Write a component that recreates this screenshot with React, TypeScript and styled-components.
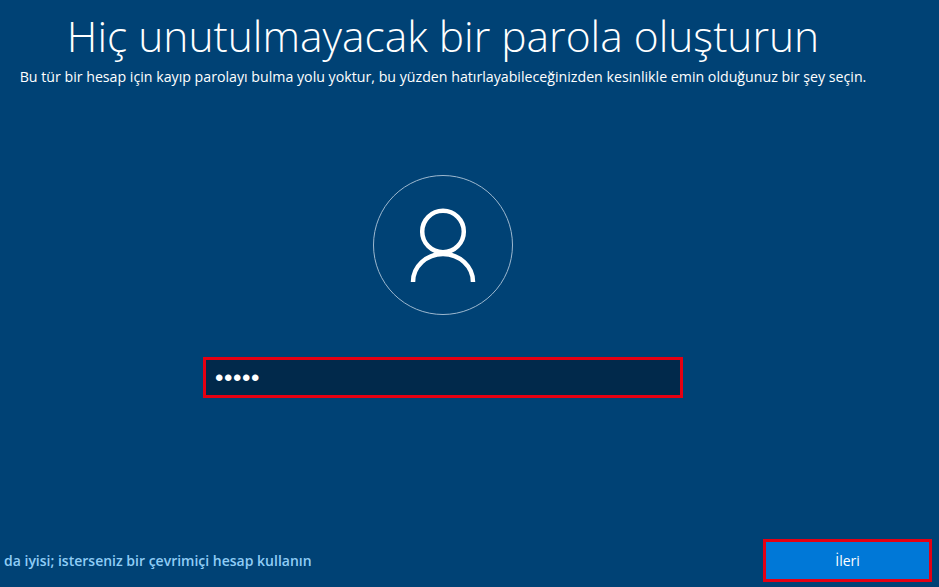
import React from "react";
import styled, { createGlobalStyle } from "styled-components";

const GlobalStyle = createGlobalStyle`
  html, body {
    margin: 0;
    padding: 0;
    background: #004275;
  }
`;

export default function App() {
  return (
    <>
      <GlobalStyle />
      <Page>
        <Main>
          <Title>Hiç unutulmayacak bir parola oluşturun</Title>
          <Subtitle>
            Bu tür bir hesap için kayıp parolayı bulma yolu yoktur, bu yüzden
            hatırlayabileceğinizden kesinlikle emin olduğunuz bir şey seçin.
          </Subtitle>
          <Avatar>
            <svg width="70" height="76" viewBox="0 0 70 76" fill="none">
              <circle cx="35" cy="24.5" r="20.8" stroke="#fff" strokeWidth="4.5" />
              <path d="M5 75 A30 28 0 0 1 65 75" stroke="#fff" strokeWidth="4.5" />
            </svg>
          </Avatar>
          <PasswordBox>•••••</PasswordBox>
        </Main>
        <Footer>
          <AccountLink>da iyisi; isterseniz bir çevrimiçi hesap kullanın</AccountLink>
          <NextButton>İleri</NextButton>
        </Footer>
      </Page>
    </>
  );
}

const Page = styled.div`
  width: 939px;
  height: 587px;
  background: #004275;
  color: #fff;
  font-family: "Open Sans", "Liberation Sans", sans-serif;
  display: flex;
  flex-direction: column;
  justify-content: space-between;
  overflow: hidden;
`;

const Main = styled.div`
  width: 886px;
  display: flex;
  flex-direction: column;
  align-items: center;
`;

const Title = styled.h1`
  margin: 8px 0 0;
  font-size: 42.5px;
  line-height: 56px;
  font-weight: 300;
  white-space: nowrap;
`;

const Subtitle = styled.p`
  margin: 3px 0 0;
  font-size: 14.2px;
  line-height: 20px;
  font-weight: 400;
  white-space: nowrap;
`;

const Avatar = styled.div`
  width: 140px;
  height: 140px;
  margin-top: 88px;
  box-sizing: border-box;
  border: 1px solid #9db8cf;
  border-radius: 50%;
  display: flex;
  align-items: center;
  justify-content: center;
`;

const PasswordBox = styled.div`
  width: 480px;
  height: 41px;
  margin-top: 42px;
  box-sizing: border-box;
  padding: 0 0 0 9px;
  border: 3px solid #e60012;
  background: #01294b;
  font-family: "Liberation Sans", sans-serif;
  font-size: 24px;
  line-height: 36px;
  letter-spacing: 0.6px;
`;

const Footer = styled.div`
  display: flex;
  align-items: center;
  justify-content: space-between;
  padding: 0 7px 5px 4px;
`;

const AccountLink = styled.a`
  color: #8fcdf5;
  font-size: 14px;
  font-weight: 600;
`;

const NextButton = styled.button`
  width: 169px;
  height: 43px;
  border: 3px solid #e60012;
  background: #0078d7;
  color: #fff;
  font-family: "Open Sans", "Liberation Sans", sans-serif;
  font-size: 14px;
  padding: 0;
`;
